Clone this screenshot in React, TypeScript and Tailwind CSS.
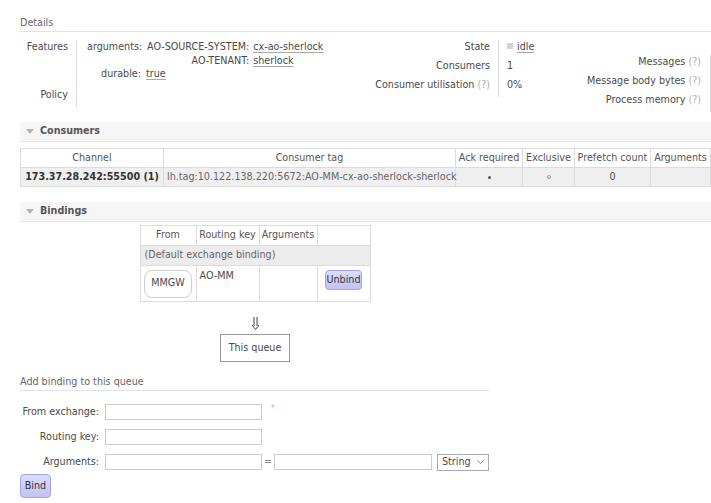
import React from 'react';

const Help = () => <span className="text-[#b0b0b0]">(?)</span>;

const Val = ({ children }: { children: React.ReactNode }) => (
  <span className="underline decoration-[#aaa] underline-offset-2">{children}</span>
);

// barra de seção com triângulo
const SectionBar = ({ title }: { title: string }) => (
  <div className="flex items-center h-[20px] bg-[#f6f6f6] border-b border-[#e6e6e6] pl-[6px] gap-[6px]">
    <svg width="8" height="5" viewBox="0 0 8 5">
      <path d="M0 0h8L4 5z" fill="#b4b4b4" />
    </svg>
    <span className="font-bold text-[#555]">{title}</span>
  </div>
);

const PurpleButton = ({ label, className }: { label: string; className: string }) => (
  <button
    className={`rounded-[4px] border border-[#a4a4e4] bg-gradient-to-b from-[#dcdcff] to-[#c2c2f4] text-[#333] ${className}`}
  >
    {label}
  </button>
);

const consumerCols = ['w-[143px]', 'w-[292px]', 'w-[67px]', 'w-[52px]', 'w-[76px]', 'w-[60px]'];

export default function App() {
  return (
    <div className="w-[711px] h-[503px] overflow-hidden bg-white pl-[20px] pt-[16px] font-['DejaVu_Sans',Verdana,sans-serif] text-[9.6px] text-[#4a4a4a] whitespace-nowrap">
      {/* Details */}
      <div className="h-[16px] leading-[14px] border-b border-[#e2e2e2] text-[#666]">Details</div>

      <div className="flex mt-[8px] h-[72px]">
        {/* bloco Features / Policy */}
        <div className="w-[340px] grid grid-cols-[57px_auto] content-start">
          <div className="text-right pr-[8px] border-r border-[#ddd] leading-[13.5px]">Features</div>
          <div className="pl-[10px] leading-[13.5px]">
            <div className="grid grid-cols-[54px_auto] gap-x-[6px] justify-start">
              <div className="text-right">arguments:</div>
              <div className="grid grid-cols-[auto_auto] gap-x-[4px] justify-start">
                <div className="text-right">AO-SOURCE-SYSTEM:</div>
                <div>
                  <Val>cx-ao-sherlock</Val>
                </div>
                <div className="text-right">AO-TENANT:</div>
                <div>
                  <Val>sherlock</Val>
                </div>
              </div>
              <div className="text-right">durable:</div>
              <div className="-ml-[1px]">
                <Val>true</Val>
              </div>
            </div>
          </div>
          <div className="text-right pr-[8px] border-r border-[#ddd] leading-[13.5px] pt-[7px] pb-[6px]">Policy</div>
          <div />
        </div>

        {/* bloco State */}
        <div className="flex items-start">
          <div className="w-[139px] text-right pr-[8px] border-r border-[#ddd] leading-[13px]">
            <div className="h-[19px]">State</div>
            <div className="h-[19px]">Consumers</div>
            <div className="h-[19px]">
              Consumer utilisation <Help />
            </div>
          </div>
          <div className="w-[62px] pl-[8px] leading-[13px]">
            <div className="h-[19px] flex items-start gap-[4px]">
              <span className="inline-block w-[6px] h-[6px] bg-[#d4d4d4] mt-[3px]" />
              <Val>idle</Val>
            </div>
            <div className="h-[19px]">1</div>
            <div className="h-[19px]">0%</div>
          </div>
        </div>

        {/* bloco Messages */}
        <div className="w-[150px] mt-[15px] text-right pr-[9px] border-r border-[#ddd] leading-[13px] self-start">
          <div className="h-[19px]">
            Messages <Help />
          </div>
          <div className="h-[19px]">
            Message body bytes <Help />
          </div>
          <div className="h-[19px]">
            Process memory <Help />
          </div>
        </div>
      </div>

      {/* Consumers */}
      <div className="mt-[10px]">
        <SectionBar title="Consumers" />
      </div>
      <table className="mt-[6px] border-collapse w-[690px] table-fixed border border-[#d0d0d0]">
        <colgroup>
          {consumerCols.map((c, i) => (
            <col key={i} className={c} />
          ))}
        </colgroup>
        <thead>
          <tr className="h-[19px] bg-white text-[#555]">
            <th className="font-normal border border-[#dcdcdc]">Channel</th>
            <th className="font-normal border border-[#dcdcdc]">Consumer tag</th>
            <th className="font-normal border border-[#dcdcdc]">Ack required</th>
            <th className="font-normal border border-[#dcdcdc]">Exclusive</th>
            <th className="font-normal border border-[#dcdcdc]">Prefetch count</th>
            <th className="font-normal border border-[#dcdcdc]">Arguments</th>
          </tr>
        </thead>
        <tbody>
          <tr className="h-[19px] bg-[#efefef]">
            <td className="border border-[#dcdcdc] text-center font-bold text-[#333]">
              173.37.28.242:55500 (1)
            </td>
            <td className="border border-[#dcdcdc] pl-[3px] text-[#666]">
              lh.tag:10.122.138.220:5672:AO-MM-cx-ao-sherlock-sherlock
            </td>
            <td className="border border-[#dcdcdc]">
              <span className="block mx-auto w-[3px] h-[3px] rounded-full bg-[#555]" />
            </td>
            <td className="border border-[#dcdcdc]">
              <span className="block mx-auto w-[4px] h-[4px] rounded-full border border-[#999]" />
            </td>
            <td className="border border-[#dcdcdc] text-center">0</td>
            <td className="border border-[#dcdcdc]" />
          </tr>
        </tbody>
      </table>

      {/* Bindings */}
      <div className="mt-[15px]">
        <SectionBar title="Bindings" />
      </div>
      <div className="w-[470px] flex flex-col items-center">
        <table className="mt-[3px] border-collapse table-fixed w-[230px] border border-[#d8d8d8]">
          <colgroup>
            <col className="w-[56px]" />
            <col className="w-[63px]" />
            <col className="w-[58px]" />
            <col className="w-[53px]" />
          </colgroup>
          <thead>
            <tr className="h-[20px] text-[#555]">
              <th className="font-normal border border-[#dcdcdc]">From</th>
              <th className="font-normal border border-[#dcdcdc]">Routing key</th>
              <th className="font-normal border border-[#dcdcdc]">Arguments</th>
              <th className="font-normal border border-[#dcdcdc]" />
            </tr>
          </thead>
          <tbody>
            <tr className="h-[20px] bg-[#ececec]">
              <td colSpan={4} className="border border-[#dcdcdc] pl-[4px] text-[#666]">
                (Default exchange binding)
              </td>
            </tr>
            <tr className="h-[36px]">
              <td className="border border-[#dcdcdc] p-0 align-middle">
                <div className="mx-auto w-[48px] h-[28px] rounded-[8px] border border-[#cfcfcf] flex items-center justify-center">
                  MMGW
                </div>
              </td>
              <td className="border border-[#dcdcdc] align-top pl-[3px] pt-[3px]">AO-MM</td>
              <td className="border border-[#dcdcdc]" />
              <td className="border border-[#dcdcdc] align-top pt-[4px] text-center">
                <PurpleButton label="Unbind" className="w-[37px] h-[20px]" />
              </td>
            </tr>
          </tbody>
        </table>

        {/* seta dupla para baixo */}
        <svg className="mt-[15px]" width="9" height="13" viewBox="0 0 9 13">
          <path d="M3 0v9M6 0v9" stroke="#444" strokeWidth="1" fill="none" />
          <path d="M1 8l3.5 4.5L8 8" stroke="#444" strokeWidth="1" fill="none" />
        </svg>
        <div className="mt-[4px] w-[70px] h-[28px] border border-[#999] flex items-center justify-center">
          This queue
        </div>
      </div>

      {/* Add binding */}
      <div className="mt-[13px] w-[470px] h-[16px] leading-[14px] border-b border-[#e2e2e2] text-[#666]">
        Add binding to this queue
      </div>

      <div className="mt-[13px] flex flex-col gap-[9px]">
        <div className="flex items-center h-[16px]">
          <div className="w-[79px] text-right pr-0">From exchange:</div>
          <input className="ml-[6px] w-[157px] h-[16px] border border-[#ccc]" />
          <span className="ml-[9px] -mt-[6px] text-[8px] text-[#f4a0a0]">*</span>
        </div>
        <div className="flex items-center h-[16px]">
          <div className="w-[79px] text-right">Routing key:</div>
          <input className="ml-[6px] w-[157px] h-[16px] border border-[#ccc]" />
        </div>
        <div className="flex items-center h-[16px]">
          <div className="w-[79px] text-right">Arguments:</div>
          <input className="ml-[6px] w-[157px] h-[16px] border border-[#ccc]" />
          <span className="w-[12px] text-center text-[#888]">=</span>
          <input className="w-[158px] h-[16px] border border-[#ccc]" />
          <div className="ml-[5px] w-[52px] h-[17px] border border-[#aaa] flex items-center justify-between px-[4px]">
            <span>String</span>
            <svg width="7" height="4" viewBox="0 0 7 4">
              <path d="M0.5 0.5L3.5 3.5L6.5 0.5" fill="none" stroke="#888" strokeWidth="0.9" />
            </svg>
          </div>
        </div>
      </div>

      <PurpleButton label="Bind" className="mt-[4px] w-[31px] h-[24px]" />
    </div>
  );
}
